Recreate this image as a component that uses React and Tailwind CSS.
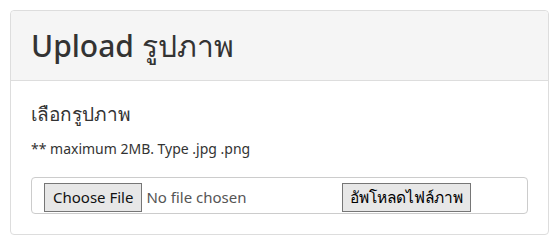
import React from "react";

const App = () => {
  return (
    <div
      className="p-[10px] bg-white text-[#333]"
      style={{ fontFamily: '"Noto Sans", "Open Sans", sans-serif' }}
    >
      <div className="w-[539px] border border-[#ddd] rounded-[4px]">
        <div className="h-[70px] bg-[#f5f5f5] border-b border-[#ddd] rounded-t-[4px] flex items-center px-[20px]">
          <h1 className="text-[30px] font-medium leading-none">Upload รูปภาพ</h1>
        </div>
        <div className="px-[20px] pt-[20px] pb-[20px]">
          <h4 className="text-[19px] leading-[26px]">เลือกรูปภาพ</h4>
          <p className="mt-[12px] text-[14px] leading-[20px]">
            ** maximum 2MB. Type .jpg .png
          </p>
          <div className="mt-[18px] h-[37px] border border-[#ccc] rounded-[4px] flex items-start pt-[5px] pl-[12px]">
            <div className="w-[298px] flex items-center">
              <button className="h-[29px] px-[8px] border border-[#767676] bg-[#e7e7e7] text-[15px] text-[#111]">
                Choose File
              </button>
              <span className="ml-[4px] text-[15px] text-[#555]">No file chosen</span>
            </div>
            <button className="h-[29px] px-[7px] border border-[#767676] bg-[#e7e7e7] text-[15.5px] leading-none text-black">
              อัพโหลดไฟล์ภาพ
            </button>
          </div>
        </div>
      </div>
    </div>
  );
};

export default App;
